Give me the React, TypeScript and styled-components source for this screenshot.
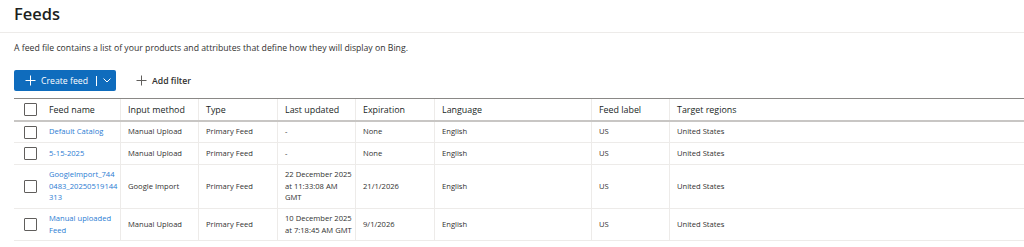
import React from "react";
import styled, { createGlobalStyle } from "styled-components";

const GlobalStyle = createGlobalStyle`
  html, body {
    margin: 0;
    padding: 0;
    background: #ffffff;
    font-family: "Open Sans", "Noto Sans", Arial, sans-serif;
    color: #323130;
  }
  * { box-sizing: border-box; }
`;

const Page = styled.div`
  width: 1024px;
  height: 247px;
  overflow: hidden;
  background: #fff;
`;

const Header = styled.div`
  height: 33px;
  padding: 2px 14px 0;
  border-bottom: 1px solid #edebe9;
`;

const Title = styled.h1`
  margin: 0;
  font-size: 16.5px;
  font-weight: 600;
  line-height: 24px;
  color: #201f1e;
`;

const Body = styled.div`
  padding: 0 0 0 14px;
`;

const Description = styled.p`
  margin: 0;
  padding-top: 8px;
  font-size: 8.7px;
  line-height: 14px;
  color: #323130;
  white-space: nowrap;
`;

const Toolbar = styled.div`
  display: flex;
  align-items: center;
  gap: 17px;
  margin-top: 15px;
  height: 21px;
`;

const SplitButton = styled.div`
  display: flex;
  align-items: center;
  height: 21px;
  width: 102px;
  background: #0f6cbd;
  border-radius: 2px;
  color: #fff;
`;

const MainPart = styled.div`
  display: flex;
  align-items: center;
  gap: 5px;
  padding-left: 11px;
  font-size: 8.7px;
  flex: 1;
`;

const Sep = styled.div`
  width: 1px;
  height: 10px;
  background: #fff;
`;

const ChevronPart = styled.div`
  width: 19px;
  display: flex;
  align-items: center;
  justify-content: center;
`;

const GhostButton = styled.div`
  display: flex;
  align-items: center;
  gap: 5px;
  padding-left: 3px;
  font-size: 8.7px;
  font-weight: 600;
  color: #323130;
`;

const Table = styled.div`
  margin-top: 7px;
  border-top: 1px solid #8a8886;
`;

const Row = styled.div<{ $h: number; $head?: boolean }>`
  display: grid;
  grid-template-columns: 107px 78px 79px 78px 79px 157px 78px 1fr;
  height: ${(p) => p.$h}px;
  border-bottom: ${(p) => (p.$head ? "2px solid #c8c6c4" : "1px solid #edebe9")};
`;

const Cell = styled.div<{ $head?: boolean }>`
  display: flex;
  align-items: center;
  padding: 0 4px 0 7px;
  border-right: 1px solid #edebe9;
  font-size: ${(p) => (p.$head ? "8.9px" : "7.6px")};
  font-weight: ${(p) => (p.$head ? 500 : 400)};
  line-height: 11.5px;
  white-space: nowrap;
  color: ${(p) => (p.$head ? "#201f1e" : "#323130")};
  &:last-child {
    border-right: none;
  }
`;

const NameCell = styled(Cell)`
  padding-left: 10px;
  gap: 12px;
`;

const Box = styled.div`
  flex: 0 0 13px;
  width: 13px;
  height: 13px;
  border: 1px solid #605e5c;
  border-radius: 1px;
  background: #fff;
`;

const Link = styled.div`
  color: #2b7cd3;
`;

const PlusIcon = ({ color }: { color: string }) => (
  <svg width="11" height="11" viewBox="0 0 11 11">
    <path d="M5.5 0.5v10M0.5 5.5h10" stroke={color} strokeWidth="1" fill="none" />
  </svg>
);

const Chevron = () => (
  <svg width="8" height="5" viewBox="0 0 8 5">
    <path d="M0.5 0.5L4 4L7.5 0.5" stroke="#fff" strokeWidth="1" fill="none" />
  </svg>
);

type Feed = {
  name: string[];
  method: string;
  type: string;
  updated: string[];
  expiration: string;
  language: string;
  label: string;
  regions: string;
  h: number;
};

const feeds: Feed[] = [
  { name: ["Default Catalog"], method: "Manual Upload", type: "Primary Feed", updated: ["-"], expiration: "None", language: "English", label: "US", regions: "United States", h: 21 },
  { name: ["5-15-2025"], method: "Manual Upload", type: "Primary Feed", updated: ["-"], expiration: "None", language: "English", label: "US", regions: "United States", h: 22 },
  { name: ["GoogleImport_744", "0483_20250519144", "313"], method: "Google Import", type: "Primary Feed", updated: ["22 December 2025", "at 11:33:08 AM", "GMT"], expiration: "21/1/2026", language: "English", label: "US", regions: "United States", h: 44 },
  { name: ["Manual uploaded", "Feed"], method: "Manual Upload", type: "Primary Feed", updated: ["10 December 2025", "at 7:18:45 AM GMT"], expiration: "9/1/2026", language: "English", label: "US", regions: "United States", h: 32 },
];

const columns = ["Input method", "Type", "Last updated", "Expiration", "Language", "Feed label", "Target regions"];

const Lines = ({ lines }: { lines: string[] }) => (
  <div>
    {lines.map((l) => (
      <div key={l}>{l}</div>
    ))}
  </div>
);

export default function App() {
  return (
    <Page>
      <GlobalStyle />
      <Header>
        <Title>Feeds</Title>
      </Header>
      <Body>
        <Description>
          A feed file contains a list of your products and attributes that define how they will display on Bing.
        </Description>
        <Toolbar>
          <SplitButton>
            <MainPart>
              <PlusIcon color="#fff" />
              Create feed
            </MainPart>
            <Sep />
            <ChevronPart>
              <Chevron />
            </ChevronPart>
          </SplitButton>
          <GhostButton>
            <PlusIcon color="#605e5c" />
            Add filter
          </GhostButton>
        </Toolbar>
        <Table>
          <Row $h={23} $head>
            <NameCell $head>
              <Box />
              Feed name
            </NameCell>
            {columns.map((c) => (
              <Cell $head key={c}>
                {c}
              </Cell>
            ))}
          </Row>
          {feeds.map((f) => (
            <Row $h={f.h} key={f.name.join("")}>
              <NameCell>
                <Box />
                <Link>
                  <Lines lines={f.name} />
                </Link>
              </NameCell>
              <Cell>{f.method}</Cell>
              <Cell>{f.type}</Cell>
              <Cell>
                <Lines lines={f.updated} />
              </Cell>
              <Cell>{f.expiration}</Cell>
              <Cell>{f.language}</Cell>
              <Cell>{f.label}</Cell>
              <Cell>{f.regions}</Cell>
            </Row>
          ))}
        </Table>
      </Body>
    </Page>
  );
}
